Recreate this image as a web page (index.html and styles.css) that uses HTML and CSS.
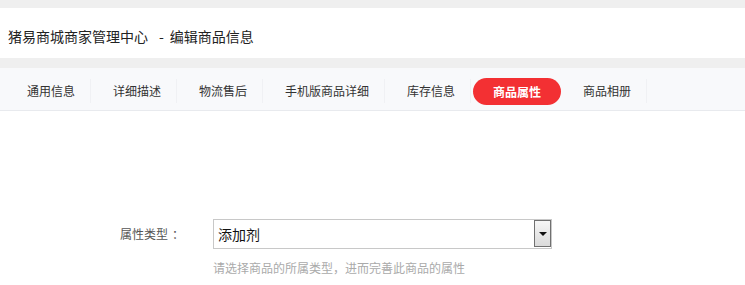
FILE: index.html
```html
<!DOCTYPE html>
<html lang="zh-CN">
<head>
<meta charset="utf-8">
<title>编辑商品信息</title>
<link rel="stylesheet" href="styles.css">
</head>
<body>
<div class="band-top"></div>
<header class="header">
  <span class="title-main">猪易商城商家管理中心</span><span class="title-dash">-</span><span class="title-sub">编辑商品信息</span>
</header>
<div class="band-mid"></div>
<nav class="tabs">
  <a class="tab">通用信息</a>
  <a class="tab">详细描述</a>
  <a class="tab">物流售后</a>
  <a class="tab">手机版商品详细</a>
  <a class="tab">库存信息</a>
  <a class="tab tab-active">商品属性</a>
  <a class="tab">商品相册</a>
</nav>
<main class="content">
  <div class="form-row">
    <label class="form-label">属性类型<span class="colon">：</span></label>
    <div class="form-field">
      <div class="select">
        <span class="select-value">添加剂</span>
        <span class="select-btn"><span class="select-arrow"></span></span>
      </div>
      <p class="hint">请选择商品的所属类型，进而完善此商品的属性</p>
    </div>
  </div>
</main>
</body>
</html>
```
FILE: styles.css
```css
* { box-sizing: border-box; }
html, body { margin: 0; padding: 0; background: #fff; }
body {
  font-family: "Noto Sans CJK SC", "Liberation Sans", sans-serif;
  color: #333;
}
.band-top { height: 8px; background: #efefef; }
.band-mid { height: 10px; background: #efefef; }
.header {
  height: 50px;
  padding: 18px 0 12px 8px;
  font-size: 14px;
  line-height: 20px;
  color: #222;
  white-space: nowrap;
}
.title-dash { margin: 0 6px 0 11px; }
.tabs {
  display: flex;
  align-items: center;
  height: 43px;
  padding: 4px 0 0 5px;
  background: #f8f9fb;
  border-bottom: 1px solid #e8eaee;
}
.tab {
  display: block;
  height: 24px;
  line-height: 24px;
  padding: 0 15px 0 22px;
  border-right: 1px solid #f0f1f4;
  font-size: 12px;
  color: #333;
  white-space: nowrap;
}
.tab-active {
  margin-left: 2px;
  width: 88px;
  height: 27px;
  line-height: 27px;
  padding: 0;
  border: none;
  border-radius: 14px;
  background: #f33033;
  color: #fff;
  font-weight: bold;
  text-align: center;
}
.content { padding-top: 108px; }
.form-row { display: flex; align-items: flex-start; }
.form-label {
  width: 213px;
  padding-right: 29px;
  text-align: right;
  font-size: 12px;
  line-height: 30px;
  color: #555;
  white-space: nowrap;
}
.colon { margin-left: 4px; }
.select {
  display: flex;
  align-items: center;
  width: 339px;
  height: 30px;
  border: 1px solid #c8c8c8;
  padding: 0 0 0 4px;
  background: #fff;
}
.select-value {
  flex: 1;
  font-size: 14px;
  color: #111;
  line-height: 20px;
}
.select-btn {
  display: flex;
  align-items: center;
  justify-content: center;
  width: 17px;
  height: 27px;
  margin: 0 0 1px 0;
  border: 1px solid #707070;
  background: linear-gradient(#f6f6f6, #dadada);
}
.select-arrow {
  width: 0;
  height: 0;
  border-left: 4px solid transparent;
  border-right: 4px solid transparent;
  border-top: 4px solid #111;
}
.hint {
  margin: 10px 0 0;
  font-size: 12px;
  line-height: 18px;
  color: #aaa;
}
```
